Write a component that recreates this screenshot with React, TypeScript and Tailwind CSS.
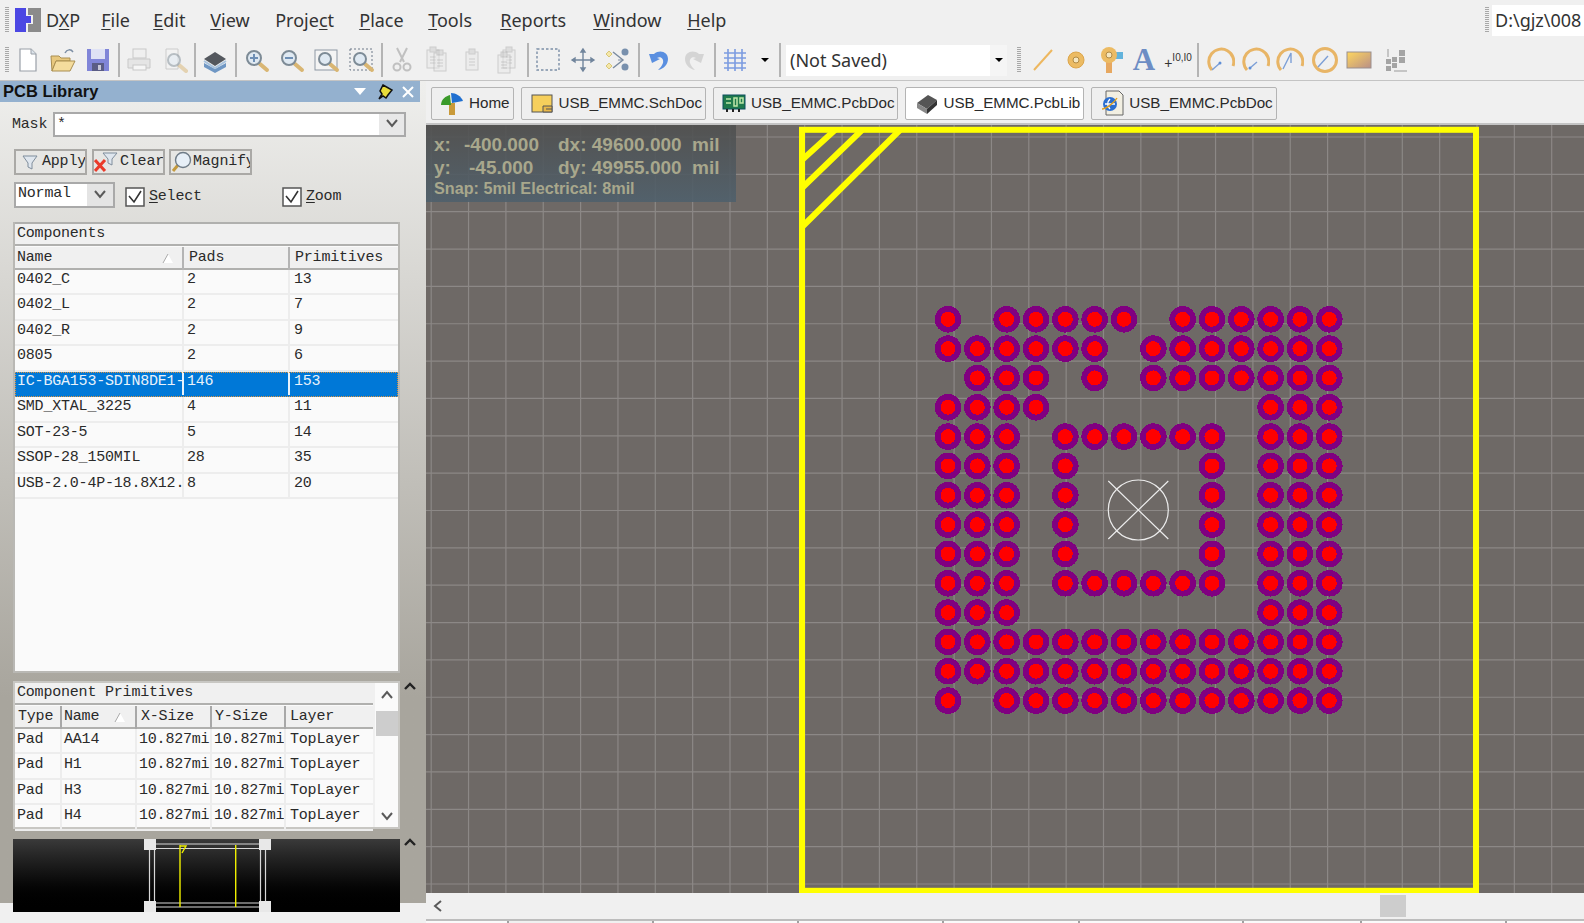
import type { ReactNode } from "react";

const mono = "font-['Liberation_Mono',monospace] text-[15px] tracking-[-0.2px] text-[#2a2a2a]";

const menus = [
  { first: "F", rest: "ile", w: "w-[52px]" },
  { first: "E", rest: "dit", w: "w-[57px]" },
  { first: "V", rest: "iew", w: "w-[65px]" },
  { first: "", rest: "Proje", u: "c", tail: "t", w: "w-[84px]" },
  { first: "P", rest: "lace", w: "w-[69px]" },
  { first: "T", rest: "ools", w: "w-[72px]" },
  { first: "R", rest: "eports", w: "w-[93px]" },
  { first: "W", rest: "indow", w: "w-[94px]" },
  { first: "H", rest: "elp", w: "w-[60px]" },
];

const components = [
  ["0402_C", "2", "13"],
  ["0402_L", "2", "7"],
  ["0402_R", "2", "9"],
  ["0805", "2", "6"],
  ["IC-BGA153-SDIN8DE1-", "146", "153"],
  ["SMD_XTAL_3225", "4", "11"],
  ["SOT-23-5", "5", "14"],
  ["SSOP-28_150MIL", "28", "35"],
  ["USB-2.0-4P-18.8X12.", "8", "20"],
];

const primitives = [
  ["Pad", "AA14"],
  ["Pad", "H1"],
  ["Pad", "H3"],
  ["Pad", "H4"],
];

const padRows = [
  [0, 2, 3, 4, 5, 6, 8, 9, 10, 11, 12, 13],
  [0, 1, 2, 3, 4, 5, 7, 8, 9, 10, 11, 12, 13],
  [1, 2, 3, 5, 7, 8, 9, 10, 11, 12, 13],
  [0, 1, 2, 3, 11, 12, 13],
  [0, 1, 2, 4, 5, 6, 7, 8, 9, 11, 12, 13],
  [0, 1, 2, 4, 9, 11, 12, 13],
  [0, 1, 2, 4, 9, 11, 12, 13],
  [0, 1, 2, 4, 9, 11, 12, 13],
  [0, 1, 2, 4, 9, 11, 12, 13],
  [0, 1, 2, 4, 5, 6, 7, 8, 9, 11, 12, 13],
  [0, 1, 2, 11, 12, 13],
  [0, 1, 2, 3, 4, 5, 6, 7, 8, 9, 10, 11, 12, 13],
  [0, 1, 2, 3, 4, 5, 6, 7, 8, 9, 10, 11, 12, 13],
  [0, 2, 3, 4, 5, 6, 7, 8, 9, 10, 11, 12, 13],
];

function Grip() {
  return <div className="h-[26px] w-[4px] shrink-0 bg-[repeating-linear-gradient(to_bottom,#a8a8a8_0,#a8a8a8_1px,transparent_1px,transparent_2px)]" />;
}

function Sep() {
  return <div className="mx-[2px] h-[34px] w-[2px] shrink-0 bg-[#b4b4b4]" />;
}

function Ico({ children, w = "w-[35px]" }: { children: ReactNode; w?: string }) {
  return (
    <div className={`flex h-[36px] shrink-0 items-center justify-center ${w}`}>
      <svg width="28" height="28" viewBox="0 0 28 28" fill="none">
        {children}
      </svg>
    </div>
  );
}

function Lens({ cx = 12, cy = 12, r = 7, op = 1 }: { cx?: number; cy?: number; r?: number; op?: number }) {
  return (
    <g opacity={op}>
      <path d={`M${cx + r - 1} ${cy + r - 1}l7 6`} stroke="#d9b673" strokeWidth="4" strokeLinecap="round" />
      <circle cx={cx} cy={cy} r={r} fill="#dfe9f2" stroke="#7d8b96" strokeWidth="2" />
    </g>
  );
}

function PageCopy({ x = 0, y = 0 }: { x?: number; y?: number }) {
  return (
    <g opacity="0.45" transform={`translate(${x} ${y})`}>
      <rect x="6" y="4" width="12" height="18" fill="#e8e8e8" stroke="#a4a4a4" />
      <rect x="9" y="1" width="6" height="5" fill="#c8c8c8" stroke="#a4a4a4" />
      <path d="M9 11h6M9 14h6M9 17h6" stroke="#a4a4a4" />
    </g>
  );
}

function Arc({ mode }: { mode: number }) {
  return (
    <>
      {mode === 3 ? (
        <circle cx="14" cy="14" r="11.5" stroke="#e8b566" strokeWidth="3" />
      ) : (
        <path d="M5 24A12.5 12.5 0 1 1 26 20" stroke="#e8b566" strokeWidth="3" />
      )}
      <path d={mode === 0 ? "M13 17l-8 7" : mode === 1 ? "M8 22l7-6" : mode === 2 ? "M7 23l8-16v10" : "M7 21l10-11"} stroke="#7c9fd6" strokeWidth="1.4" />
      {mode === 0 && <circle cx="13" cy="17" r="1.5" fill="#5f8fd6" />}
      {mode === 1 && <circle cx="8" cy="22" r="1.5" fill="#5f8fd6" />}
    </>
  );
}

function TopBar() {
  return (
    <div className="flex h-[40px] items-center bg-[#f0f0f0] pl-[5px] font-['Noto_Sans',sans-serif] text-[18px] text-[#333]">
      <Grip />
      <svg width="26" height="24" viewBox="0 0 26 24" className="ml-[6px] shrink-0">
        <path d="M0 0h11v8h5v7h-5v9H0z" fill="#4b47e3" />
        <path d="M13 0h13v24H13v-8h5V7h-5z" fill="#8b8b8b" />
      </svg>
      <div className="ml-[5px] mr-[21px]">
        D<span className="underline underline-offset-2">X</span>P
      </div>
      <div className="flex">
        {menus.map((m) => (
          <div key={m.rest} className={m.w}>
            <span className="underline underline-offset-2">{m.first}</span>
            {m.rest}
            {m.u && <span className="underline underline-offset-2">{m.u}</span>}
            {m.tail}
          </div>
        ))}
      </div>
      <div className="ml-auto flex items-center gap-[3px]">
        <Grip />
        <div className="flex h-[31px] w-[92px] items-center bg-white pl-[3px]">D:\gjz\008</div>
      </div>
    </div>
  );
}

function ToolBar() {
  return (
    <div className="flex h-[41px] items-center border-b border-[#c4c4c4] bg-[#f0f0f0] pl-[4.5px]">
      <Grip />
      <div className="w-[2px]" />
      <Ico>
        <path d="M6 3h11l5 5v17H6z" fill="#fff" stroke="#9aa0a8" strokeWidth="1.2" />
        <path d="M17 3v5h5" fill="#dce3ea" stroke="#9aa0a8" />
      </Ico>
      <Ico>
        <path d="M2 10h8l2 2h9v3H7l-4 10z" fill="#e8c87e" stroke="#a98e50" />
        <path d="M7 15h19l-5 10H3z" fill="#f4dc9d" stroke="#a98e50" />
        <path d="M16 7c2-4 6-4 8-1" stroke="#7d8fa5" strokeWidth="1.5" />
      </Ico>
      <Ico>
        <rect x="3" y="3" width="22" height="22" fill="#8085d8" />
        <rect x="7" y="3" width="14" height="10" fill="#dfe2f5" />
        <rect x="8" y="17" width="12" height="8" fill="#5a5c85" />
        <rect x="14" y="19" width="3" height="5" fill="#c8c8d8" />
      </Ico>
      <Sep />
      <Ico>
        <g opacity="0.45">
          <rect x="8" y="3" width="13" height="9" fill="#eee" stroke="#999" />
          <path d="M3 13h22v9H3z" fill="#d8d8d8" stroke="#999" />
          <rect x="8" y="19" width="13" height="5" fill="#fff" stroke="#999" />
        </g>
      </Ico>
      <Ico>
        <path d="M6 3h12v20H6z" fill="#f2f2f2" stroke="#ccc" />
        <Lens cx={14} cy={14} r={6} op={0.5} />
      </Ico>
      <Sep />
      <Ico>
        <path d="M3 17l11 6 11-6v4l-11 6-11-6z" fill="#6f97c4" />
        <path d="M3 13l11-7 11 7-11 7z" fill="#54585e" />
        <path d="M3 15l11 7 11-7" stroke="#a8c3de" strokeWidth="2" />
      </Ico>
      <Sep />
      <Ico>
        <Lens />
        <path d="M8 12h8M12 8v8" stroke="#6e8fb5" strokeWidth="2" />
      </Ico>
      <Ico>
        <Lens />
        <path d="M8 12h8" stroke="#6e8fb5" strokeWidth="2" />
      </Ico>
      <Ico>
        <rect x="3" y="4" width="22" height="20" fill="#f4f4f4" stroke="#8d97a3" />
        <Lens cx={13} cy={13} r={6} />
      </Ico>
      <Ico>
        <rect x="3" y="3" width="22" height="21" stroke="#6c7888" strokeDasharray="2 2" />
        <Lens cx={13} cy={13} r={6} />
      </Ico>
      <Sep />
      <Ico>
        <g opacity="0.45" stroke="#888" strokeWidth="2">
          <path d="M9 2l7 14M19 2l-7 14" />
          <circle cx="9" cy="21" r="3.5" />
          <circle cx="19" cy="21" r="3.5" />
        </g>
      </Ico>
      <Ico>
        <PageCopy x={-2} />
        <PageCopy x={5} y={3} />
      </Ico>
      <Ico>
        <PageCopy x={2} y={2} />
      </Ico>
      <Ico>
        <PageCopy x={4} />
        <PageCopy x={-1} y={5} />
      </Ico>
      <Sep />
      <Ico>
        <rect x="3" y="3" width="22" height="21" stroke="#7b8ea6" strokeWidth="1.4" strokeDasharray="2.5 2" />
      </Ico>
      <Ico>
        <path d="M14 3v22M3 14h22M14 3l-2 3h4zM14 25l-2-3h4zM3 14l3-2v4zM25 14l-3-2v4z" stroke="#71859c" strokeWidth="1.4" fill="#71859c" />
      </Ico>
      <Ico>
        <path d="M9 6l10 8-10 8" stroke="#7a8ba0" strokeWidth="1.4" />
        <path d="M5 5l3 3-3 3-3-3zM5 17l3 3-3 3-3-3z" fill="#f5e7a8" stroke="#d8c778" />
        <circle cx="21" cy="6" r="3.5" fill="#7890ad" />
        <circle cx="21" cy="21" r="3.5" fill="#7890ad" />
        <path d="M14 14h5" stroke="#7a8ba0" />
      </Ico>
      <Sep />
      <Ico>
        <path d="M4 8l3 9 8-4-3-1c4-2 7 1 6 5-1 3-3 5-5 7 6-1 10-6 10-11 0-7-8-10-14-5z" fill="#5a8fe0" />
      </Ico>
      <Ico>
        <path d="M24 8l-3 9-8-4 3-1c-4-2-7 1-6 5 1 3 3 5 5 7-6-1-10-6-10-11 0-7 8-10 14-5z" fill="#d4d4d4" />
      </Ico>
      <Sep />
      <Ico>
        <path d="M7 3v22M14 3v22M21 3v22M3 7h22M3 12h22M3 17h22M3 22h22" stroke="#7c9ce0" strokeWidth="1.6" />
      </Ico>
      <div className="flex w-[24px] shrink-0 justify-center">
        <div className="h-0 w-0 border-x-[4px] border-t-[4px] border-x-transparent border-t-black" />
      </div>
      <Sep />
      <div className="ml-[3.5px] flex h-[31px] w-[221px] shrink-0 items-center justify-between bg-white pl-[4px] font-['Noto_Sans',sans-serif] text-[18px] text-[#333]">
        (Not Saved)
        <div className="flex h-full w-[17px] items-center justify-center bg-[#f5f5f5]">
          <div className="h-0 w-0 border-x-[4px] border-t-[4px] border-x-transparent border-t-black" />
        </div>
      </div>
      <div className="ml-[10px] mr-[4px]">
        <Grip />
      </div>
      <Ico w="w-[34px]">
        <path d="M6 24L24 4" stroke="#edb75f" strokeWidth="2" />
      </Ico>
      <Ico w="w-[34px]">
        <circle cx="14" cy="14" r="8" fill="#ecbb63" stroke="#dca54a" />
        <circle cx="14" cy="14" r="3" fill="#f6e7c0" stroke="#b08a45" />
      </Ico>
      <Ico w="w-[34px]">
        <path d="M10 14h6v13h-6z" fill="#e7a860" />
        <path d="M18 6h9v7h-9z" fill="#62b3dc" />
        <circle cx="13" cy="9" r="8" fill="#ecbb63" />
        <circle cx="13" cy="9" r="3" fill="#f6e7c0" stroke="#b08a45" />
      </Ico>
      <div className="flex h-[36px] w-[34px] shrink-0 items-center justify-center font-['Liberation_Serif',serif] text-[31px] font-bold text-[#6d8dc4]">A</div>
      <div className="flex h-[36px] w-[34px] shrink-0 items-center justify-center font-['Liberation_Sans',sans-serif] text-[10px] text-[#333]">
        <span className="mt-[6px] text-[14px]">+</span>
        <span className="mb-[5px]">I0,I0</span>
      </div>
      <Sep />
      <div className="w-[3px]" />
      <Ico w="w-[34.5px]">
        <Arc mode={0} />
      </Ico>
      <Ico w="w-[34.5px]">
        <Arc mode={1} />
      </Ico>
      <Ico w="w-[34.5px]">
        <Arc mode={2} />
      </Ico>
      <Ico w="w-[34.5px]">
        <Arc mode={3} />
      </Ico>
      <Ico w="w-[34.5px]">
        <defs>
          <linearGradient id="rectFill" x1="0" y1="0" x2="1" y2="1">
            <stop offset="0" stopColor="#ffd75e" />
            <stop offset="1" stopColor="#b98f86" />
          </linearGradient>
        </defs>
        <rect x="2" y="6" width="24" height="16" fill="url(#rectFill)" stroke="#9a8f8f" />
      </Ico>
      <Ico w="w-[36px]">
        <path d="M11 11h5v5h-5zM18 4h6v6h-6zM18 11h6v6h-6zM5 13h5v5H5zM5 20h5v5H5zM11 17h5v5h-5z" fill="#a4a4a4" />
        <path d="M7 11V3M13 25h13" stroke="#9a9a9a" />
      </Ico>
    </div>
  );
}

function DocTab({ label, active, icon }: { label: string; active?: boolean; icon: ReactNode }) {
  return (
    <div
      className={`flex h-[33px] shrink-0 items-center gap-[4px] rounded-[2px] border border-[#b4b4b4] pl-[4px] pr-[3px] font-['Liberation_Sans',sans-serif] text-[15.2px] text-[#2a2a2a] ${
        active ? "bg-white" : "bg-[#efefef]"
      }`}
    >
      <svg width="26" height="26" viewBox="0 0 26 26" fill="none" className="ml-[3px] shrink-0">
        {icon}
      </svg>
      {label}
    </div>
  );
}

function TabsRow() {
  return (
    <div className="flex h-[44px] items-center gap-[7px] border-b-2 border-[#c4c4c4] bg-[#f0f0f0] pl-[5px] pt-[2px]">
      <DocTab
        label="Home"
        icon={
          <>
            <path d="M10 13h6v12h-6z" fill="#c99a3a" />
            <path d="M2 15c0-6 5-9 9-10l1 10z" fill="#3a9a2a" />
            <path d="M12 3c5 0 10 3 12 8l-11 2z" fill="#1f6fd0" />
          </>
        }
      />
      <DocTab
        label="USB_EMMC.SchDoc"
        icon={
          <>
            <rect x="3" y="5" width="20" height="17" fill="#f6cf5c" stroke="#555" />
            <path d="M14 16h9v6h-9zM17 19h6" stroke="#555" fill="#e9b84a" />
          </>
        }
      />
      <DocTab
        label="USB_EMMC.PcbDoc"
        icon={
          <>
            <rect x="2" y="5" width="22" height="14" fill="#1f7a4c" stroke="#0d4f5e" />
            <path d="M5 9h5M5 13h5M13 8h3v8h-3zM19 8h3v5h-3z" stroke="#bfe6a8" strokeWidth="1.5" />
            <path d="M6 19v3M12 19v3M18 19v3" stroke="#222" strokeWidth="2" />
          </>
        }
      />
      <DocTab
        active
        label="USB_EMMC.PcbLib"
        icon={
          <>
            <path d="M4 13l11-8 9 5-10 9z" fill="#555" />
            <path d="M4 13l10 6v5L4 18z" fill="#888" />
            <path d="M14 19l10-9v5l-10 9z" fill="#333" />
          </>
        }
      />
      <DocTab
        label="USB_EMMC.PcbDoc"
        icon={
          <>
            <path d="M7 1h13l4 4v20H7z" fill="#f2efe2" stroke="#666" />
            <circle cx="11" cy="14" r="7" fill="#2b6fd0" />
            <path d="M6 14h10M11 9c-3 3-3 7 0 10" stroke="#fff" strokeWidth="1.5" />
            <path d="M3 19c4 0 12-6 15-11" stroke="#e0a020" strokeWidth="1.4" />
          </>
        }
      />
    </div>
  );
}

function SmallBtn({ label, icon, w }: { label: string; icon: ReactNode; w: string }) {
  return (
    <div className={`flex h-[26px] items-center overflow-hidden whitespace-nowrap border-2 border-[#aaa9a6] bg-[#e6e6e4] leading-[18px] ${mono} ${w}`}>
      {icon}
      {label}
    </div>
  );
}

function Check({ u, rest }: { u: string; rest: string }) {
  return (
    <div className={`mt-[3px] flex items-center gap-[4px] ${mono}`}>
      <svg width="20" height="20" viewBox="0 0 20 20" className="shrink-0">
        <rect x="1" y="1" width="18" height="18" fill="#fff" stroke="#555" strokeWidth="1.5" />
        <path d="M4 9l5 6 7-11" fill="none" stroke="#333" strokeWidth="1.6" />
      </svg>
      <span className="mt-[2px]">
        <span className="underline underline-offset-2">{u}</span>
        {rest}
      </span>
    </div>
  );
}

function Chevron({ down, left, className }: { down?: boolean; left?: boolean; className?: string }) {
  const d = left ? "M8 1L2 6l6 5" : down ? "M1 2l5 6 5-6" : "M1 8l5-6 5 6";
  return (
    <svg width="12" height="12" viewBox="0 0 12 12" fill="none" className={className}>
      <path d={d} stroke="#5a5a5a" strokeWidth="2" />
    </svg>
  );
}

function Collapse() {
  return (
    <svg width="12" height="10" viewBox="0 0 12 10" fill="none">
      <path d="M1 8l5-5 5 5" stroke="#222" strokeWidth="2.4" />
    </svg>
  );
}

function SortMark() {
  return (
    <svg width="12" height="11" viewBox="0 0 12 11">
      <path d="M6 1l5 9H1z" fill="#fff" />
      <path d="M6 1L1 10" stroke="#aaa" fill="none" />
    </svg>
  );
}

function LibraryPanel() {
  return (
    <div className="flex h-[822px] w-[426px] shrink-0 flex-col bg-gradient-to-b from-[#efefed] to-[#a8a59d] to-[75%]">
      <div className="flex h-[21px] w-[420px] shrink-0 items-center justify-between bg-[#94b1cf] pl-[3px] pr-[6px]">
        <span className="font-['Liberation_Sans',sans-serif] text-[16.5px] font-bold text-[#111]">PCB Library</span>
        <div className="flex items-center">
          <div className="h-0 w-0 border-x-[6px] border-t-[7px] border-x-transparent border-t-white" />
          <svg width="16" height="16" viewBox="0 0 16 16" className="ml-[11px]">
            <path d="M6 1l9 5-4 5-2 3-3-2-4 3 3-5-2-3z" fill="#e8dc3a" stroke="#111" strokeWidth="1.5" />
          </svg>
          <svg width="12" height="12" viewBox="0 0 12 12" className="ml-[9px]">
            <path d="M1 1l10 10M11 1L1 11" stroke="#fff" strokeWidth="2" />
          </svg>
        </div>
      </div>

      <div className="flex h-[44px] shrink-0 items-center pl-[12px]">
        <span className={`${mono} mt-[3px] w-[41px]`}>Mask</span>
        <div className={`flex h-[25px] w-[353px] items-stretch border-2 border-[#a9a9a9] bg-white ${mono}`}>
          <span className="flex-1 pl-[2px]">*</span>
          <div className="flex w-[25px] items-center justify-center bg-[#e8e8e8]">
            <Chevron down />
          </div>
        </div>
      </div>

      <div className="mt-[3px] flex shrink-0 pl-[14px]">
        <SmallBtn
          w="w-[73px]"
          label="Apply"
          icon={
            <svg width="22" height="18" viewBox="0 0 22 18" className="ml-[4px] shrink-0">
              <path d="M3 3h14l-5 7v6l-4-2v-4z" fill="#dfe6ee" stroke="#7f8d9c" />
            </svg>
          }
        />
        <div className="ml-[5px]">
          <SmallBtn
            w="w-[73px]"
            label="Clear"
            icon={
              <svg width="27" height="24" viewBox="0 0 27 24" className="-ml-[1px] shrink-0">
                <path d="M10 3h14l-5 6v6l-4-2V9z" fill="#dfe6ee" stroke="#7f8d9c" />
                <path d="M2 10l10 11M12 10L2 21" stroke="#ea3a2a" strokeWidth="3" />
              </svg>
            }
          />
        </div>
        <div className="ml-[4px]">
          <SmallBtn
            w="w-[83px]"
            label="Magnify"
            icon={
              <svg width="22" height="24" viewBox="0 0 22 24" className="shrink-0">
                <path d="M7 15l-5 6" stroke="#c49a3e" strokeWidth="3" />
                <circle cx="12" cy="10" r="7.5" fill="#e7eff7" stroke="#6f7c88" strokeWidth="1.4" />
              </svg>
            }
          />
        </div>
      </div>

      <div className="mt-[7px] flex h-[26px] shrink-0 items-center pl-[14px]">
        <div className={`flex h-[26px] w-[101px] items-stretch border-2 border-[#a9a9a9] bg-white ${mono}`}>
          <span className="flex-1 pl-[2px] leading-[20px]">Normal</span>
          <div className="flex w-[26px] items-center justify-center bg-[#e4e4e4]">
            <Chevron down />
          </div>
        </div>
        <div className="ml-[10px] w-[157px]">
          <Check u="S" rest="elect" />
        </div>
        <Check u="Z" rest="oom" />
      </div>

      <div className={`ml-[13px] mt-[14px] flex h-[451px] w-[387px] shrink-0 flex-col border-2 border-t-0 border-[#b9b8b4] bg-[#fafafa] ${mono}`}>
        <div className="flex h-[24px] shrink-0 items-center border-y-2 border-[#b0b0ae] bg-[#f0f0f0] pl-[2px]">Components</div>
        <div className="mt-[1px] grid h-[23px] shrink-0 grid-cols-[169px_106px_1fr] items-center border-b-2 border-[#b0b0ae] bg-[#f0f0f0]">
          <div className="flex items-center justify-between border-r-2 border-[#b4b4b4] pl-[2px] pr-[8px]">
            Name
            <SortMark />
          </div>
          <div className="border-r-2 border-[#b4b4b4] pl-[5px]">Pads</div>
          <div className="pl-[5px]">Primitives</div>
        </div>
        {components.map((c, i) => {
          const sel = i === 4;
          return (
            <div
              key={c[0]}
              className={`grid h-[25.45px] shrink-0 grid-cols-[169px_106px_1fr] items-center border-b-2 leading-[20px] ${
                sel ? "border-[#0078d7] bg-[#0078d7] text-[#e8f2fb] outline-1 -outline-offset-1 outline-dotted outline-[#d9923f]" : "border-[#ededed]"
              }`}
            >
              <div className={`h-full overflow-hidden whitespace-nowrap border-r-2 pl-[2px] ${sel ? "border-[#e8f2fb]" : "border-[#ededed]"}`}>{c[0]}</div>
              <div className={`h-full border-r-2 pl-[3px] ${sel ? "border-[#e8f2fb]" : "border-[#ededed]"}`}>{c[1]}</div>
              <div className="h-full pl-[4px]">{c[2]}</div>
            </div>
          );
        })}
      </div>

      <div className="relative ml-[13px] mt-[8px] flex h-[148px] w-[387px] shrink-0 border-y-2 border-l-2 border-r-2 border-[#c8c7c3] bg-[#fafafa]">
        <div className={`flex w-[358px] flex-col ${mono}`}>
          <div className="flex h-[22px] shrink-0 items-center border-b-2 border-[#b0b0ae] bg-[#f0f0f0] pl-[2px]">Component Primitives</div>
          <div className="mt-[1px] grid h-[23px] shrink-0 grid-cols-[47px_75px_75px_74px_1fr] items-center border-b-2 border-[#b0b0ae] bg-[#f0f0f0]">
            <div className="border-r-2 border-[#a8a8a8] pl-[3px]">Type</div>
            <div className="flex items-center justify-between border-r-2 border-[#a8a8a8] pl-[2px] pr-[9px]">
              Name
              <SortMark />
            </div>
            <div className="border-r-2 border-[#a8a8a8] pl-[4px]">X-Size</div>
            <div className="border-r-2 border-[#a8a8a8] pl-[3px]">Y-Size</div>
            <div className="pl-[4px]">Layer</div>
          </div>
          {primitives.map((p) => (
            <div key={p[1]} className="grid h-[25.4px] shrink-0 grid-cols-[47px_75px_75px_74px_1fr] items-center border-b-2 border-[#ededed] leading-[21px]">
              <div className="h-full border-r-2 border-[#ededed] pl-[2px]">{p[0]}</div>
              <div className="h-full border-r-2 border-[#ededed] pl-[2px]">{p[1]}</div>
              <div className="h-full overflow-hidden whitespace-nowrap border-r-2 border-[#ededed] pl-[2px]">10.827mil</div>
              <div className="h-full overflow-hidden whitespace-nowrap border-r-2 border-[#ededed] pl-[2px]">10.827mil</div>
              <div className="h-full pl-[4px]">TopLayer</div>
            </div>
          ))}
        </div>
        <div className="flex flex-1 flex-col items-center border-l-2 border-[#f0f0f0] pt-[7px]">
          <Chevron />
          <div className="mt-[9px] h-[25px] w-[22px] bg-[#cdcdcd]" />
          <Chevron down className="mt-auto mb-[4px]" />
        </div>
      </div>

      <div className="ml-[13px] mt-[10px] flex h-[73px] w-[387px] shrink-0 items-center justify-center bg-gradient-to-b from-[#3a3a3a] to-black">
        <svg width="128" height="73" viewBox="142 838 128 73" fill="none">
          <path d="M148.5 838v72M153.5 838v72M259.5 838v72M264.5 838v72M143 843h127M143 847.5h127M143 902h127M143 906h127" stroke="#d8d8d8" strokeWidth="1.2" />
          <path d="M143 838h12v11h-12zM258 838h12v11h-12zM143 900h12v11h-12zM258 900h12v11h-12z" fill="#e8e8e8" />
          <path d="M179 844v62M234.7 844v62" stroke="#f0f000" strokeWidth="1.4" />
          <path d="M179 845h6l-4 7" stroke="#f0f000" strokeWidth="1.4" />
        </svg>
      </div>
    </div>
  );
}

function PcbCanvas() {
  const gridX = Array.from({ length: 32 }, (_, i) => 431.2 + 37.35 * i);
  const gridY = Array.from({ length: 21 }, (_, i) => 137 + 37.35 * i);
  return (
    <div className="relative h-[768px] shrink-0 overflow-hidden bg-[#6e6966]">
      <svg width="1158" height="768" viewBox="426 125 1158 768" fill="none" className="block">
        {gridX.map((x) => (
          <line key={x} x1={x} x2={x} y1="125" y2="893" stroke="#8c8886" strokeWidth="1.2" />
        ))}
        {gridY.map((y) => (
          <line key={y} y1={y} y2={y} x1="426" x2="1584" stroke="#8c8886" strokeWidth="1.2" />
        ))}
        <rect x="802" y="129.8" width="674" height="761" stroke="#ffff00" strokeWidth="6" />
        <path d="M835 130l-33 30M862 130l-60 58M900 130l-98 97" stroke="#ffff00" strokeWidth="6" />
        {padRows.map((cols, r) =>
          cols.map((c) => (
            <g key={`${r}-${c}`} shapeRendering="crispEdges">
              <circle cx={948 + c * 29.33} cy={319.3 + r * 29.33} r="13.3" fill="#800080" />
              <circle cx={948 + c * 29.33} cy={319.3 + r * 29.33} r="7.5" fill="#ff0000" />
            </g>
          )),
        )}
        <circle cx="1138.3" cy="510" r="30" stroke="#ececec" strokeWidth="1.2" />
        <path d="M1108.3 481l60 58M1168.3 481l-60 58" stroke="#ececec" strokeWidth="1.2" />
      </svg>
      <div className="absolute left-0 top-0 h-[77px] w-[310px] bg-gradient-to-b from-[#50504f]/90 to-[#4f606c]/90 pl-[8px] pt-[9px] font-['Liberation_Sans',sans-serif] font-bold text-[#a8a78c]">
        <div className="flex h-[23px] items-center whitespace-pre text-[19px]">
          <span className="w-[30px]">x:</span>
          <span className="w-[94px]">-400.000</span>
          <span className="w-[134px]">dx: 49600.000</span>
          <span>mil</span>
        </div>
        <div className="flex h-[23px] items-center whitespace-pre text-[19px]">
          <span className="w-[35px]">y:</span>
          <span className="w-[89px]">-45.000</span>
          <span className="w-[134px]">dy: 49955.000</span>
          <span>mil</span>
        </div>
        <div className="text-[16.2px] leading-[17px]">Snap: 5mil Electrical: 8mil</div>
      </div>
    </div>
  );
}

function StatusStrip() {
  return (
    <div className="flex h-[30px] shrink-0 flex-col bg-[#f0f0f0]">
      <div className="relative flex h-[26px] shrink-0 items-center pl-[7px]">
        <Chevron left />
        <div className="absolute left-[954px] top-[2px] h-[22px] w-[26px] bg-[#cdcdcd]" />
      </div>
      <div className="flex h-[4px] border-t-2 border-[#bdbdbd] bg-[#fafafa]">
        <div className="w-[83px] border-r-2 border-[#a0a0a0]" />
        <div className="w-[143px] bg-[#f0f0f0]" />
        <div className="w-[147px] border-x-2 border-[#a0a0a0]" />
        <div className="w-[145px] border-r-2 border-[#a0a0a0]" />
        <div className="w-[136px] border-r-2 border-[#a0a0a0]" />
        <div className="w-[164px] border-r-2 border-[#a0a0a0]" />
        <div className="w-[118px] border-r-2 border-[#a0a0a0]" />
        <div className="w-[145px] border-r-2 border-[#a0a0a0]" />
      </div>
    </div>
  );
}

export default function App() {
  return (
    <div className="flex h-[923px] w-[1584px] flex-col overflow-hidden bg-[#f0f0f0]">
      <TopBar />
      <ToolBar />
      <div className="flex min-h-0 flex-1">
        <div className="relative">
          <LibraryPanel />
          <div className="absolute left-[404px] top-[600px] flex flex-col">
            <Collapse />
            <div className="mt-[146px]">
              <Collapse />
            </div>
          </div>
        </div>
        <div className="flex min-w-0 flex-1 flex-col">
          <TabsRow />
          <PcbCanvas />
          <StatusStrip />
        </div>
      </div>
    </div>
  );
}
